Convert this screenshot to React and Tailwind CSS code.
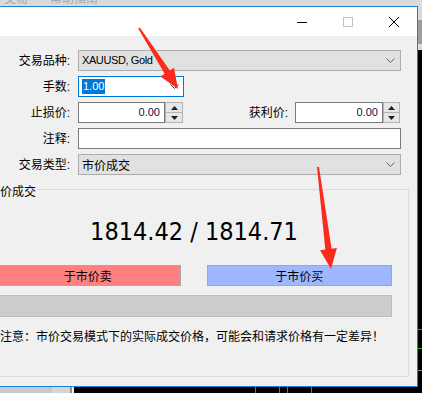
import React from "react";

const Chevron = ({ color = "#606060" }) => (
  <svg width="9" height="5" viewBox="0 0 9 5" className="shrink-0">
    <polyline points="0.5,0.5 4.5,4.5 8.5,0.5" fill="none" stroke={color} strokeWidth="1" />
  </svg>
);

const Spin = ({ w }) => (
  <div className={`${w} h-full flex flex-col border border-[#b4b4b4] bg-[#e6e6e6]`}>
    <div className="flex-1 flex items-center justify-center border-b border-[#b4b4b4]">
      <svg width="7" height="4" viewBox="0 0 7 4"><polygon points="0,4 7,4 3.5,0" fill="#202020" /></svg>
    </div>
    <div className="flex-1 flex items-center justify-center">
      <svg width="7" height="4" viewBox="0 0 7 4"><polygon points="0,0 7,0 3.5,4" fill="#202020" /></svg>
    </div>
  </div>
);

const Label = ({ children, w = "w-[99px]" }) => (
  <div className={`${w} shrink-0 text-right pr-0 text-[12px] leading-[16px] text-black font-['Liberation_Sans','Noto_Sans_CJK_SC',sans-serif]`}>
    {children}
  </div>
);

export default function App() {
  return (
    <div className="relative w-[422px] h-[393px] overflow-hidden bg-[#dadada] flex flex-col">
      {/* top background strip */}
      <div className="h-[6px] shrink-0 overflow-hidden flex gap-[22px] pl-[4px] text-[12px] leading-[12px] text-[#a8a8a8] font-['Noto_Sans_CJK_SC',sans-serif]">
        <span className="-mt-[8px]">交易</span>
        <span className="-mt-[8px]">帮助指南</span>
      </div>

      <div className="flex h-[381px] shrink-0">
        {/* window */}
        <div className="ml-[-30px] w-[448px] h-full shrink-0 border border-[#1883d7] flex flex-col bg-[#f0f0f0]">
          {/* title bar */}
          <div className="h-[29px] shrink-0 bg-white flex justify-end">
            <div className="w-[46px] h-full flex items-center justify-center">
              <svg width="10" height="10" viewBox="0 0 10 10"><line x1="0" y1="5.5" x2="10" y2="5.5" stroke="#000" strokeWidth="1" /></svg>
            </div>
            <div className="w-[46px] h-full flex items-center justify-center">
              <svg width="10" height="10" viewBox="0 0 10 10"><rect x="0.5" y="0.5" width="9" height="9" fill="none" stroke="#c4c4c4" strokeWidth="1" /></svg>
            </div>
            <div className="w-[46px] h-full flex items-center justify-center">
              <svg width="10" height="10" viewBox="0 0 10 10"><path d="M0 0 L10 10 M10 0 L0 10" stroke="#000" strokeWidth="1" /></svg>
            </div>
          </div>

          {/* content */}
          <div className="flex-1 flex flex-col">
            <div className="pt-[14px] flex flex-col gap-[5px]">
              {/* row 1 */}
              <div className="h-[21px] flex items-center">
                <Label>交易品种:</Label>
                <div className="ml-[8px] w-[323px] h-full border border-[#adadad] bg-[#e1e1e1] flex items-center pl-[3px] pr-[5px]">
                  <span className="flex-1 text-[11px] tracking-[-0.4px] text-black font-['Liberation_Sans',sans-serif]">XAUUSD, Gold</span>
                  <Chevron />
                </div>
              </div>
              {/* row 2 */}
              <div className="h-[21px] flex items-center">
                <Label>手数:</Label>
                <div className="ml-[8px] w-[106px] h-full border border-[#0078d7] bg-white flex items-center pl-[3px] pr-[4px]">
                  <div className="flex-1 flex">
                    <span className="bg-[#0078d7] text-white text-[11px] leading-[15px] px-[1px] font-['Liberation_Sans',sans-serif]">1.00</span>
                  </div>
                  <Chevron color="#404040" />
                </div>
              </div>
              {/* row 3 */}
              <div className="h-[21px] flex items-center">
                <Label>止损价:</Label>
                <div className="ml-[8px] h-full flex">
                  <div className="w-[87px] h-full border border-[#7a7a7a] bg-white flex items-center justify-end pr-[4px] text-[11px] text-[#10104a] font-['Liberation_Sans',sans-serif]">0.00</div>
                  <Spin w="w-[18px]" />
                </div>
                <Label w="w-[105px]">获利价:</Label>
                <div className="ml-[7px] h-full flex">
                  <div className="w-[88px] h-full border border-[#7a7a7a] bg-white flex items-center justify-end pr-[4px] text-[11px] text-[#10104a] font-['Liberation_Sans',sans-serif]">0.00</div>
                  <Spin w="w-[17px]" />
                </div>
              </div>
              {/* row 4 */}
              <div className="h-[21px] flex items-center">
                <Label>注释:</Label>
                <div className="ml-[8px] w-[323px] h-full border border-[#7a7a7a] bg-white" />
              </div>
              {/* row 5 */}
              <div className="h-[21px] flex items-center">
                <Label>交易类型:</Label>
                <div className="ml-[8px] w-[323px] h-full border border-[#adadad] bg-[#e1e1e1] flex items-center pl-[3px] pr-[5px]">
                  <span className="flex-1 text-[12px] leading-[16px] text-black font-['Noto_Sans_CJK_SC',sans-serif]">市价成交</span>
                  <Chevron />
                </div>
              </div>
            </div>

            {/* group box */}
            <div className="mt-[14px] ml-[8px] w-[430px] h-[188px] shrink-0 border border-[#dcdcdc] flex flex-col">
              <div className="-mt-[7px] ml-[7px] px-[1px] w-fit bg-[#f0f0f0] text-[12px] leading-[16px] text-black font-['Noto_Sans_CJK_SC',sans-serif]">市价成交</div>
              <div className="mt-[18px] h-[30px] text-center text-[25px] leading-[30px] text-black font-['DejaVu_Sans_Condensed','Liberation_Sans',sans-serif]">
                1814.42 / 1814.71
              </div>
              <div className="mt-[18px] pl-[15px] pr-[16px] grid grid-cols-2 gap-[26px]">
                <div className="h-[21px] border border-[#a8a8a8] bg-[#ff8080] flex items-center justify-center text-[12px] leading-[16px] text-black font-['Noto_Sans_CJK_SC',sans-serif]">于市价卖</div>
                <div className="h-[21px] border border-[#a8a8a8] bg-[#9db8ff] flex items-center justify-center text-[12px] leading-[16px] text-black font-['Noto_Sans_CJK_SC',sans-serif]">于市价买</div>
              </div>
              <div className="mt-[9px] ml-[15px] mr-[16px] h-[22px] border border-[#bdbdbd] bg-[#cccccc]" />
              <div className="mt-[11px] pl-[20px] text-left text-[12px] leading-[16px] text-black font-['Noto_Sans_CJK_SC',sans-serif] whitespace-nowrap">
                注意：市价交易模式下的实际成交价格，可能会和请求价格有一定差异！
              </div>
            </div>
          </div>
        </div>

        {/* right strip */}
        <div className="w-[4px] flex flex-col">
          <div className="h-[14px] bg-[#dadada]" />
          <div className="h-[24px] bg-[#9e9e9e]" />
          <div className="h-[6px] bg-[#dadada]" />
          <div className="flex-1 bg-black flex flex-col">
            <div className="mt-[279px] h-px bg-[#00c000]" />
            <div className="mt-[18px] h-px bg-[#00c000]" />
            <div className="mt-[21px] h-px bg-[#808080]" />
          </div>
        </div>
      </div>

      {/* bottom strip */}
      <div className="flex-1 flex">
        <div className="w-[52px] bg-[#c2cad4]" />
        <div className="w-[18px] bg-[#d6d6d6]" />
        <div className="w-[2px] bg-[#8f8f8f]" />
        <div className="w-[2px] bg-[#f0f0f0]" />
        <div className="flex-1 bg-black flex">
          <div className="ml-[181px] w-px bg-[#00c000]" />
          <div className="ml-[23px] w-px bg-[#00c000]" />
          <div className="ml-[7px] w-px bg-[#00c000]" />
          <div className="ml-[23px] w-px bg-[#00c000]" />
        </div>
      </div>

      {/* annotation arrows */}
      <svg className="absolute inset-0 pointer-events-none" width="422" height="393" viewBox="0 0 422 393">
        <polygon points="138.2,28.5 164.7,73.8 160.5,76.5 178,89 174,67.8 169.8,70.5 139.8,27.5" fill="#fa2a1c" />
        <polygon points="317,167.1 325.3,249.6 320,250.2 331,269 336.9,248.1 331.6,248.8 319,166.9" fill="#fa2a1c" />
      </svg>
    </div>
  );
}
